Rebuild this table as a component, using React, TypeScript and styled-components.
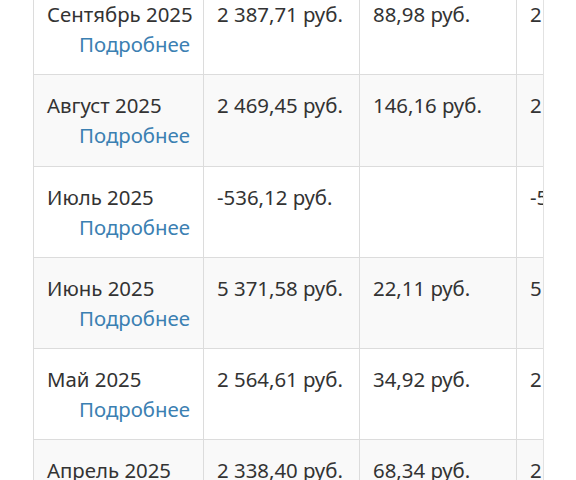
import React from 'react'
import styled, { createGlobalStyle } from 'styled-components'

type Row = {
  month: string
  charged: string
  extra?: string
  total: string
}

const rows: Row[] = [
  { month: 'Сентябрь 2025', charged: '2 387,71 руб.', extra: '88,98 руб.', total: '2 476,69 руб.' },
  { month: 'Август 2025', charged: '2 469,45 руб.', extra: '146,16 руб.', total: '2 615,61 руб.' },
  { month: 'Июль 2025', charged: '-536,12 руб.', total: '-536,12 руб.' },
  { month: 'Июнь 2025', charged: '5 371,58 руб.', extra: '22,11 руб.', total: '5 393,69 руб.' },
  { month: 'Май 2025', charged: '2 564,61 руб.', extra: '34,92 руб.', total: '2 599,53 руб.' },
  { month: 'Апрель 2025', charged: '2 338,40 руб.', extra: '68,34 руб.', total: '2 406,74 руб.' },
]

const App = () => {
  return (
    <>
      <GlobalStyle />
      <Page>
        <TableWrap>
          <Table>
            <colgroup>
              <col style={{ width: 170 }} />
              <col style={{ width: 156 }} />
              <col style={{ width: 157 }} />
              <col style={{ width: 170 }} />
            </colgroup>
            <tbody>
              {rows.map((r, i) => (
                <Tr key={r.month} $striped={i % 2 === 1}>
                  <Td>
                    <Month>{r.month}</Month>
                    <More href="#">Подробнее</More>
                  </Td>
                  <Td>{r.charged}</Td>
                  <Td>{r.extra}</Td>
                  <Td>{r.total}</Td>
                </Tr>
              ))}
            </tbody>
          </Table>
        </TableWrap>
      </Page>
    </>
  )
}

const GlobalStyle = createGlobalStyle`
  html, body {
    margin: 0;
    padding: 0;
    background: #ffffff;
    overflow: hidden;
  }
`

const Page = styled.div`
  width: 576px;
  height: 480px;
  overflow: hidden;
  font-family: "Noto Sans", "Open Sans", sans-serif;
  color: #333333;
`

const TableWrap = styled.div`
  margin: -17px 0 0 33px;
  width: 510px;
  overflow: hidden;
  border-right: 1px solid #e2e2e2;
`

const Table = styled.table`
  border-collapse: collapse;
  table-layout: fixed;
  width: 653px;
`

const Tr = styled.tr<{ $striped: boolean }>`
  background: ${p => (p.$striped ? '#f9f9f9' : '#ffffff')};
`

const Td = styled.td`
  border: 1px solid #dcdcdc;
  padding: 15px 13px 15px 13px;
  vertical-align: top;
  font-size: 20.4px;
  line-height: 30.125px;
  white-space: nowrap;
  overflow: hidden;
`

const Month = styled.div``

const More = styled.a`
  display: block;
  text-align: right;
  color: #3b80b2;
  text-decoration: none;
`

export default App
